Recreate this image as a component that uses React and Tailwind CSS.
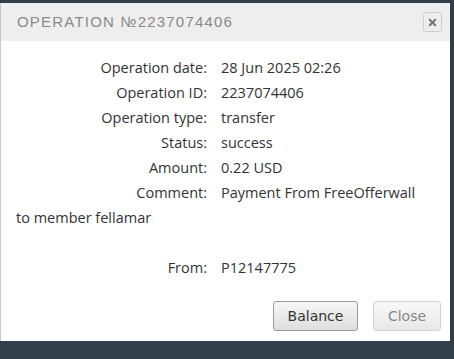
import { X } from 'lucide-react';

const rows = [
  ['Operation date:', '28 Jun 2025 02:26'],
  ['Operation ID:', '2237074406'],
  ['Operation type:', 'transfer'],
  ['Status:', 'success'],
  ['Amount:', '0.22 USD'],
  ['Comment:', 'Payment From FreeOfferwall'],
];

function Row({ label, value }) {
  return (
    <div className="flex h-[25px] items-center">
      <div className="w-[206px] shrink-0 text-right">{label}</div>
      <div className="pl-[14px]">{value}</div>
    </div>
  );
}

export default function App() {
  return (
    <div className="h-[359px] w-[454px] bg-[#323f48] pt-[3px]">
      <div className="flex h-[338px] w-[450px] flex-col rounded-tr-[3px] border-l border-[#c8c8c8] bg-white">
        <div className="flex h-[38px] items-center justify-between bg-[#eeeeee] pl-[16px] pr-[8px]">
          <span className="font-['Liberation_Sans',sans-serif] text-[15px] tracking-[1.2px] text-[#8a8a8a]">
            OPERATION №2237074406
          </span>
          <button className="flex h-[20px] w-[19px] items-center justify-center rounded-[3px] border border-[#d0d0d0] bg-[#eeeeee]">
            <X className="h-[11px] w-[11px] text-[#777]" strokeWidth={4.5} />
          </button>
        </div>
        <div className="flex-1 pt-[14px] font-['Open_Sans',sans-serif] text-[14.5px] text-[#333]">
          {rows.map(([l, v]) => (
            <Row key={l} label={l} value={v} />
          ))}
          <div className="flex h-[25px] items-center pl-[15px]">to member fellamar</div>
          <div className="h-[25px]" />
          <Row label="From:" value="P12147775" />
          <div className="mt-[21px] flex justify-end gap-[15px] pr-[9px] font-['DejaVu_Sans',sans-serif] text-[14px]">
            <button className="h-[30px] w-[85px] rounded-[3px] border border-[#9a9a9a] bg-gradient-to-b from-[#f6f6f6] to-[#dedede] text-[#333]">
              Balance
            </button>
            <button className="h-[30px] w-[68px] rounded-[3px] border border-[#d2d2d2] bg-gradient-to-b from-[#f8f8f8] to-[#e8e8e8] text-[#888]">
              Close
            </button>
          </div>
        </div>
      </div>
    </div>
  );
}
